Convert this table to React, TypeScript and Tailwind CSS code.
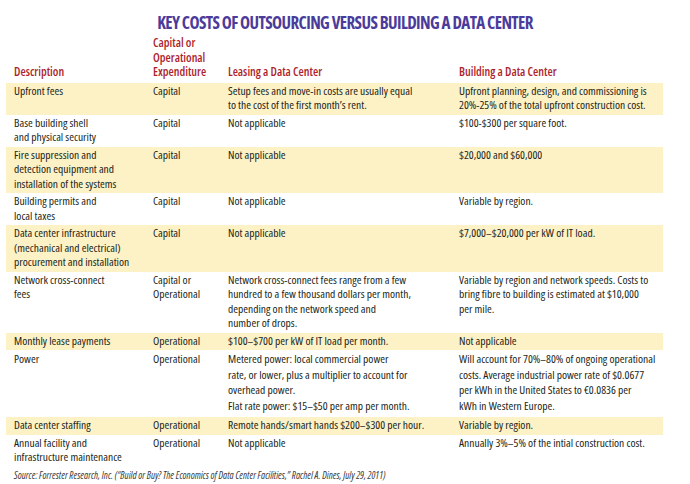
import React from "react";

type Row = { d: string[]; t: string[]; l: string[]; b: string[]; y: boolean; tall?: boolean };

const rows: Row[] = [
  { d: ["Upfront fees"], t: ["Capital"], l: ["Setup fees and move-in costs are usually equal", "to the cost of the first month’s rent."], b: ["Upfront planning, design, and commissioning is", "20%-25% of the total upfront construction cost."], y: true },
  { d: ["Base building shell", "and physical security"], t: ["Capital"], l: ["Not applicable"], b: ["$100-$300 per square foot."], y: false },
  { d: ["Fire suppression and", "detection equipment and", "installation of the systems"], t: ["Capital"], l: ["Not applicable"], b: ["$20,000 and $60,000"], y: true },
  { d: ["Building permits and", "local taxes"], t: ["Capital"], l: ["Not applicable"], b: ["Variable by region."], y: false },
  { d: ["Data center infrastructure", "(mechanical and electrical)", "procurement and installation"], t: ["Capital"], l: ["Not applicable"], b: ["$7,000–$20,000 per kW of IT load."], y: true },
  { d: ["Network cross-connect", "fees"], t: ["Capital or", "Operational"], l: ["Network cross-connect fees range from a few", "hundred to a few thousand dollars per month,", "depending on the network speed and", "number of drops."], b: ["Variable by region and network speeds. Costs to", "bring fibre to building is estimated at $10,000", "per mile."], y: false },
  { d: ["Monthly lease payments"], t: ["Operational"], l: ["$100–$700 per kW of IT load per month."], b: ["Not applicable"], y: true },
  { d: ["Power"], t: ["Operational"], l: ["Metered power: local commercial power", "rate, or lower, plus a multiplier to account for", "overhead power.", "Flat rate power: $15–$50 per amp per month."], b: ["Will account for 70%–80% of ongoing operational", "costs. Average industrial power rate of $0.0677", "per kWh in the United States to €0.0836 per", "kWh in Western Europe."], y: false, tall: true },
  { d: ["Data center staffing"], t: ["Operational"], l: ["Remote hands/smart hands $200–$300 per hour."], b: ["Variable by region."], y: true },
  { d: ["Annual facility and", "infrastructure maintenance"], t: ["Operational"], l: ["Not applicable"], b: ["Annually 3%–5% of the intial construction cost."], y: false },
];

function Lines({ items }: { items: string[] }) {
  return (
    <div>
      {items.map((s, i) => (
        <div key={i} className="whitespace-nowrap">{s}</div>
      ))}
    </div>
  );
}

export default function App() {
  return (
    <div className="w-[690px] h-[484px] bg-white text-[#221f20] overflow-hidden font-['Open_Sans',sans-serif] font-stretch-condensed">
      <div className="pt-[12px] text-center text-[17px] leading-[22px] font-bold tracking-[-0.6px] text-[#4b3b9b]">
        KEY COSTS OF OUTSOURCING VERSUS BUILDING A DATA CENTER
      </div>
      <div className="pl-[6px] pt-[2px]">
        <div className="w-[657px] grid grid-cols-[139px_75px_231px_204px] pl-[8px] text-[12px] leading-[14.5px] font-semibold text-[#ad1f2d] items-end pb-[3px]">
          <div>Description</div>
          <div>Capital or<br />Operational<br />Expenditure</div>
          <div>Leasing a Data Center</div>
          <div>Building a Data Center</div>
        </div>
        <div className="w-[657px] text-[11.5px]">
          {rows.map((r, i) => (
            <div
              key={i}
              className={`grid grid-cols-[139px_75px_231px_204px] pl-[8px] pt-[1px] ${r.tall ? "leading-[15.5px] pb-[4px]" : "leading-[14.5px] pb-[2px]"} ${r.y ? "bg-[#fdf1c6]" : "bg-white"}`}
            >
              <Lines items={r.d} />
              <Lines items={r.t} />
              <Lines items={r.l} />
              <Lines items={r.b} />
            </div>
          ))}
        </div>
        <div className="pl-[8px] pt-[2px] text-[10px] leading-[12px] italic text-[#3a3a3a]">
          Source: Forrester Research, Inc. (“Build or Buy? The Economics of Data Center Facilities,” Rachel A. Dines, July 29, 2011)
        </div>
      </div>
    </div>
  );
}
